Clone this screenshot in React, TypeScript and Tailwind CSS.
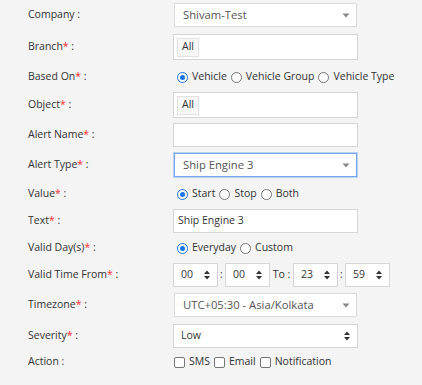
import React from "react";

const font = { fontFamily: '"Open Sans", "Noto Sans", sans-serif' };

function Req() {
  return <span className="text-[#ff2b2b]">*</span>;
}

function Label({ text, req }: { text: string; req?: boolean }) {
  return (
    <div className="w-[173px] shrink-0 pl-[28px] text-[10.5px] text-[#333]">
      {text}
      {req && <Req />}
      {" :"}
    </div>
  );
}

function Caret() {
  return (
    <svg width="8" height="5" viewBox="0 0 8 5" className="shrink-0">
      <path d="M0.5 0.5 L7.5 0.5 L4 4.5 Z" fill="#888" />
    </svg>
  );
}

function Spin() {
  return (
    <svg width="6" height="10" viewBox="0 0 6 10" className="shrink-0">
      <path d="M0 4 L3 0.5 L6 4 Z M0 6 L3 9.5 L6 6 Z" fill="#333" />
    </svg>
  );
}

function Select2({ value, focus }: { value: string; focus?: boolean }) {
  return (
    <div
      className={
        "ml-[1px] flex h-full w-[183px] items-center justify-between bg-white pl-[8px] pr-[6px] text-[11.25px] text-[#555] " +
        (focus ? "border border-[#7aa7ea] shadow-[0_0_0_1px_#b7d0f5]" : "border border-[#dcdcdc]")
      }
    >
      <span>{value}</span>
      <Caret />
    </div>
  );
}

function TagInput() {
  return (
    <div className="flex h-full w-[185px] items-center border border-[#d6d6d6] bg-white pl-[3px]">
      <span className="flex h-[19px] w-[22px] items-center justify-center border border-[#e2e2e2] bg-[#f7f7f7] text-[10.5px] text-[#333]">
        All
      </span>
    </div>
  );
}

function Radio({ checked }: { checked?: boolean }) {
  return checked ? (
    <span className="flex h-[11px] w-[11px] shrink-0 items-center justify-center rounded-full border-[1.5px] border-[#1a73e8] bg-white">
      <span className="h-[5px] w-[5px] rounded-full bg-[#1a73e8]" />
    </span>
  ) : (
    <span className="h-[11px] w-[11px] shrink-0 rounded-full border border-[#767676] bg-white" />
  );
}

function Radios({ items }: { items: string[] }) {
  return (
    <div className="flex items-center pl-[4px] text-[10.5px] text-[#333]">
      {items.map((t, i) => (
        <span key={t} className="mr-[4px] flex items-center gap-[4px]">
          <Radio checked={i === 0} />
          {t}
        </span>
      ))}
    </div>
  );
}

function Check({ text }: { text: string }) {
  return (
    <span className="mr-[4px] flex items-center gap-[4px]">
      <span className="h-[11px] w-[11px] shrink-0 rounded-[2px] border border-[#767676] bg-white" />
      {text}
    </span>
  );
}

function TimeBox({ value }: { value: string }) {
  return (
    <div className="flex h-full w-[45px] items-center justify-between border border-[#d6d6d6] bg-white pl-[7px] pr-[7px] text-[10.5px] text-[#333]">
      <span>{value}</span>
      <Spin />
    </div>
  );
}

function Row({ className, children }: { className: string; children: React.ReactNode }) {
  return <div className={"flex items-center " + className}>{children}</div>;
}

export default function App() {
  return (
    <div className="h-[385px] w-[422px] overflow-hidden bg-[#f4f4f4] pt-[3px]" style={font}>
      <Row className="h-[24px]">
        <Label text="Company" />
        <Select2 value="Shivam-Test" />
      </Row>
      <Row className="mt-[7px] h-[26px]">
        <Label text="Branch" req />
        <TagInput />
      </Row>
      <Row className="mt-[7px] h-[20px]">
        <Label text="Based On" req />
        <Radios items={["Vehicle", "Vehicle Group", "Vehicle Type"]} />
      </Row>
      <Row className="mt-[5px] h-[26px]">
        <Label text="Object" req />
        <TagInput />
      </Row>
      <Row className="mt-[5px] h-[24px]">
        <Label text="Alert Name" req />
        <div className="h-full w-[185px] border border-[#d6d6d6] bg-white" />
      </Row>
      <Row className="mt-[6px] h-[24px]">
        <Label text="Alert Type" req />
        <Select2 value="Ship Engine 3" focus />
      </Row>
      <Row className="mt-[7px] h-[20px]">
        <Label text="Value" req />
        <Radios items={["Start", "Stop", "Both"]} />
      </Row>
      <Row className="mt-[5px] h-[24px]">
        <Label text="Text" req />
        <div className="flex h-full w-[185px] items-center border border-[#d6d6d6] bg-white pl-[4px] text-[10.5px] text-[#333]">
          Ship Engine 3
        </div>
      </Row>
      <Row className="mt-[5px] h-[20px]">
        <Label text="Valid Day(s)" req />
        <Radios items={["Everyday", "Custom"]} />
      </Row>
      <Row className="mt-[5px] h-[24px]">
        <Label text="Valid Time From" req />
        <div className="flex h-full items-center text-[10.5px] text-[#333]">
          <TimeBox value="00" />
          <span className="w-[7px] text-center">:</span>
          <TimeBox value="00" />
          <span className="w-[23px] text-center">To :</span>
          <TimeBox value="23" />
          <span className="w-[7px] text-center">:</span>
          <TimeBox value="59" />
        </div>
      </Row>
      <Row className="mt-[6px] h-[24px]">
        <Label text="Timezone" req />
        <Select2 value="UTC+05:30 - Asia/Kolkata" />
      </Row>
      <Row className="mt-[7px] h-[24px]">
        <Label text="Severity" req />
        <div className="flex h-full w-[185px] items-center justify-between border border-[#d6d6d6] bg-white pl-[7px] pr-[7px] text-[10.5px] text-[#333]">
          <span>Low</span>
          <Spin />
        </div>
      </Row>
      <Row className="mt-[4px] h-[20px]">
        <Label text="Action" />
        <div className="flex items-center pl-[1px] text-[10.5px] text-[#333]">
          <Check text="SMS" />
          <Check text="Email" />
          <Check text="Notification" />
        </div>
      </Row>
    </div>
  );
}
